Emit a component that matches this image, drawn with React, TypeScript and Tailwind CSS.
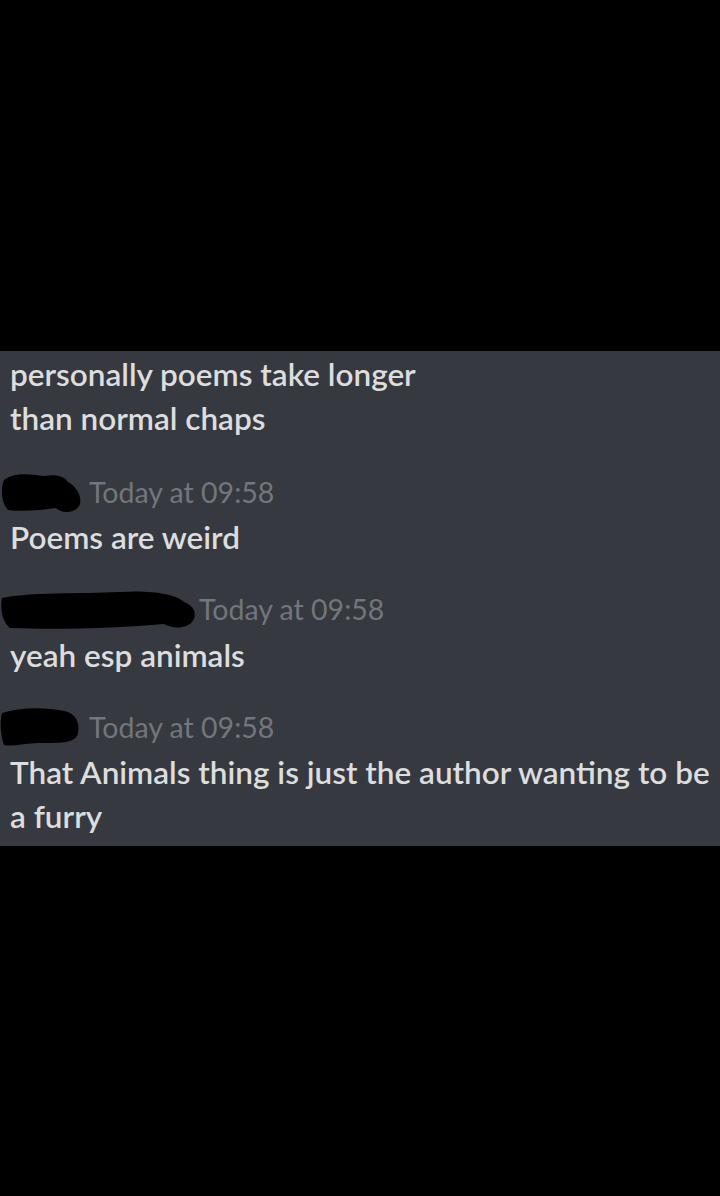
import React from "react";

type Msg = {
  blob: { w: number; d: string };
  time: string;
  lines: string[];
};

const msgs: Msg[] = [
  {
    blob: {
      w: 86,
      d: "M4 12 C14 4 30 6 44 8 C56 6 64 8 68 14 C76 18 82 28 80 36 C76 46 62 46 56 40 C42 42 24 44 8 42 C2 36 0 22 4 12 Z",
    },
    time: "Today at 09:58",
    lines: ["Poems are weird"],
  },
  {
    blob: {
      w: 196,
      d: "M2 12 C30 6 80 8 120 6 C150 4 176 8 184 16 C194 20 198 28 192 36 C184 44 172 42 164 38 C120 42 60 44 10 42 C2 36 0 22 2 12 Z",
    },
    time: "Today at 09:58",
    lines: ["yeah esp animals"],
  },
  {
    blob: {
      w: 86,
      d: "M2 10 C20 4 44 4 64 8 C76 10 80 20 78 30 C76 40 62 40 42 40 C26 40 10 44 4 42 C0 30 0 18 2 10 Z",
    },
    time: "Today at 09:58",
    lines: ["That Animals thing is just the author wanting to be", "a furry"],
  },
];

const Header = ({ blob, time }: { blob: Msg["blob"]; time: string }) => (
  <div className="flex h-[48px] items-center">
    <svg width={blob.w} height={48} viewBox={`0 0 ${blob.w} 48`} className="shrink-0">
      <path d={blob.d} fill="#000" />
    </svg>
    <span className="ml-[3px] text-[28.5px] leading-none text-[#72767d]">{time}</span>
  </div>
);

export default function App() {
  return (
    <div className="flex min-h-[1196px] w-[720px] flex-col bg-black font-['Lato','Noto_Sans',sans-serif]">
      <div className="h-[351px] shrink-0" />
      <div className="flex flex-col bg-[#36393f] pb-[8px] pl-[10px] pt-[1px] text-[#dcddde]">
        <div className="text-[31.5px] font-semibold leading-[44px]">
          <div>personally poems take longer</div>
          <div>than normal chaps</div>
        </div>
        {msgs.map((m, i) => (
          <div key={i} className={i === 0 ? "mt-[28px] -ml-[10px]" : "mt-[26.5px] -ml-[10px]"}>
            <Header blob={m.blob} time={m.time} />
            <div className="-mt-[1px] pl-[10px] text-[31.5px] font-semibold leading-[44px]">
              {m.lines.map((l, j) => (
                <div key={j}>{l}</div>
              ))}
            </div>
          </div>
        ))}
      </div>
      <div className="flex-1" />
    </div>
  );
}
